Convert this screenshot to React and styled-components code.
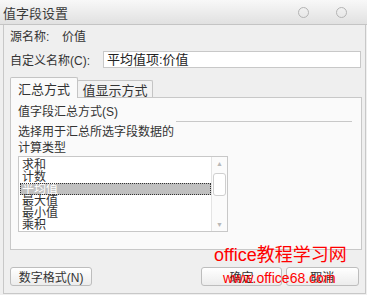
import styled, { createGlobalStyle } from 'styled-components';

const GlobalStyle = createGlobalStyle`
  body {
    margin: 0;
    background: #ffffff;
    font-family: "Liberation Sans", "Noto Sans CJK SC", sans-serif;
  }
`;

const Window = styled.div`
  position: relative;
  width: 367px;
  height: 295px;
  display: flex;
  flex-direction: column;
  background: #efefef;
  color: #333;
  font-size: 12px;
  overflow: hidden;
`;

const TitleBar = styled.div`
  height: 25px;
  flex-shrink: 0;
  display: flex;
  align-items: center;
  padding-left: 3px;
  box-sizing: border-box;
  border-bottom: 1px solid #c4c4c4;
  background: linear-gradient(#f8f8f8, #e1e1e1);
  font-size: 13px;
  color: #3a3a3a;
`;

const Title = styled.span`
  flex: 1;
`;

const WinButton = styled.span`
  width: 9px;
  height: 9px;
  border: 1px solid #b4b4b4;
  border-radius: 50%;
  margin-right: ${(p) => p.$gap}px;
`;

const Body = styled.div`
  flex: 1;
  margin: 0 1px 1px 3px;
  padding: 2px 0 0 6px;
  border: 1px solid #c8c8c8;
  border-top: none;
  display: flex;
  flex-direction: column;
`;

const FieldRow = styled.div`
  display: flex;
  align-items: center;
  height: 17px;
  margin-top: ${(p) => p.$top || 0}px;
`;

const Label = styled.span`
  width: ${(p) => p.$width}px;
  flex-shrink: 0;
`;

const TextBox = styled.div`
  width: 258px;
  height: 17px;
  box-sizing: border-box;
  border: 1px solid #c8c8c8;
  background: #fff;
  padding-left: 3px;
  line-height: 15px;
  font-size: 13px;
  color: #222;
`;

const TabStrip = styled.div`
  display: flex;
  align-items: flex-end;
  height: 20px;
  margin-top: 9px;
`;

const Tab = styled.div`
  position: relative;
  z-index: ${(p) => (p.$active ? 1 : 0)};
  width: ${(p) => p.$width}px;
  height: ${(p) => (p.$active ? 21 : 17)}px;
  margin-bottom: ${(p) => (p.$active ? -1 : 0)}px;
  margin-left: ${(p) => (p.$active ? 0 : -1)}px;
  box-sizing: border-box;
  border: 1px solid #c4c4c4;
  border-bottom: none;
  border-radius: 2px 2px 0 0;
  background: ${(p) => (p.$active ? '#fafafa' : '#f2f2f2')};
  display: flex;
  align-items: center;
  justify-content: center;
  padding-top: ${(p) => (p.$active ? 0 : 1)}px;
  font-size: 13px;
  color: #333;
`;

const Panel = styled.div`
  width: 352px;
  height: 153px;
  box-sizing: border-box;
  border: 1px solid #c8c8c8;
  background: #fafafa;
  padding: 6px 0 0 7px;
  display: flex;
  flex-direction: column;
`;

const SectionTitle = styled.div`
  line-height: 16px;
  font-size: 12px;
`;

const Separator = styled.div`
  height: 1px;
  background: #c8c8c8;
  margin: 1px 9px 0 158px;
`;

const Description = styled.div`
  margin-top: 2px;
  line-height: 16px;
`;

const ListBox = styled.div`
  width: 210px;
  height: 76px;
  box-sizing: border-box;
  border: 1px solid #c8c8c8;
  background: #fff;
  display: flex;
`;

const Items = styled.div`
  flex: 1;
  padding: 2px 0 0 1px;
  overflow: hidden;
`;

const Item = styled.div`
  height: 12px;
  line-height: 12px;
  padding-left: 2px;
  font-size: 12px;
  box-sizing: border-box;
  color: ${(p) => (p.$selected ? '#fff' : '#333')};
  background: ${(p) => (p.$selected ? '#c0c0c0' : 'transparent')};
  outline: ${(p) => (p.$selected ? '1px dotted #333' : 'none')};
  outline-offset: -1px;
`;

const ScrollBar = styled.div`
  width: 15px;
  border-left: 1px solid #e4e4e4;
  background: #fbfbfb;
  display: flex;
  flex-direction: column;
  align-items: center;
`;

const Arrow = styled.span`
  height: 13px;
  line-height: 13px;
  font-size: 7px;
  color: #b8b8b8;
`;

const Thumb = styled.div`
  width: 13px;
  height: 23px;
  box-sizing: border-box;
  border: 1px solid #cfcfcf;
  border-radius: 3px;
  background: #fff;
  margin-top: 3px;
`;

const Spacer = styled.div`
  flex: 1;
`;

const ButtonRow = styled.div`
  display: flex;
  margin-top: 17px;
  padding-right: 6px;
`;

const Button = styled.div`
  width: ${(p) => p.$width}px;
  height: 19px;
  box-sizing: border-box;
  margin-left: ${(p) => p.$left || 0}px;
  border: 1px solid #bdbdbd;
  border-radius: 3px;
  background: linear-gradient(#ffffff, #ececec);
  display: flex;
  align-items: center;
  justify-content: center;
  font-size: 12px;
  color: #333;
`;

const Watermark = styled.div`
  position: absolute;
  left: 214px;
  top: 244px;
  color: #ff0000;
  font-family: "Liberation Sans", "Noto Sans CJK SC", sans-serif;
  z-index: 5;
  pointer-events: none;
`;

const WatermarkTitle = styled.div`
  font-size: 18px;
  line-height: 22px;
`;

const WatermarkUrl = styled.div`
  font-size: 14px;
  line-height: 16px;
  margin: 4px 0 0 9px;
`;

const items = ['求和', '计数', '平均值', '最大值', '最小值', '乘积'];

export default function App() {
  return (
    <>
      <GlobalStyle />
      <Window>
        <TitleBar>
          <Title>值字段设置</Title>
          <WinButton $gap={27} />
          <WinButton $gap={20} />
        </TitleBar>
        <Body>
          <FieldRow $top={0}>
            <Label $width={52}>源名称:</Label>
            <span>价值</span>
          </FieldRow>
          <FieldRow $top={7}>
            <Label $width={93}>自定义名称(C):</Label>
            <TextBox>平均值项:价值</TextBox>
          </FieldRow>
          <TabStrip>
            <Tab $active $width={68}>汇总方式</Tab>
            <Tab $width={76}>值显示方式</Tab>
          </TabStrip>
          <Panel>
            <SectionTitle>值字段汇总方式(S)</SectionTitle>
            <Separator />
            <Description>
              选择用于汇总所选字段数据的
              <br />
              计算类型
            </Description>
            <ListBox>
              <Items>
                {items.map((it, i) => (
                  <Item key={it} $selected={i === 2}>{it}</Item>
                ))}
              </Items>
              <ScrollBar>
                <Arrow>▲</Arrow>
                <Thumb />
                <Spacer />
                <Arrow>▼</Arrow>
              </ScrollBar>
            </ListBox>
          </Panel>
          <ButtonRow>
            <Button $width={83}>数字格式(N)</Button>
            <Button $width={81} $left={109}>确定</Button>
            <Button $width={74} $left={4}>取消</Button>
          </ButtonRow>
        </Body>
        <Watermark>
          <WatermarkTitle>office教程学习网</WatermarkTitle>
          <WatermarkUrl>www.office68.com</WatermarkUrl>
        </Watermark>
      </Window>
    </>
  );
}
